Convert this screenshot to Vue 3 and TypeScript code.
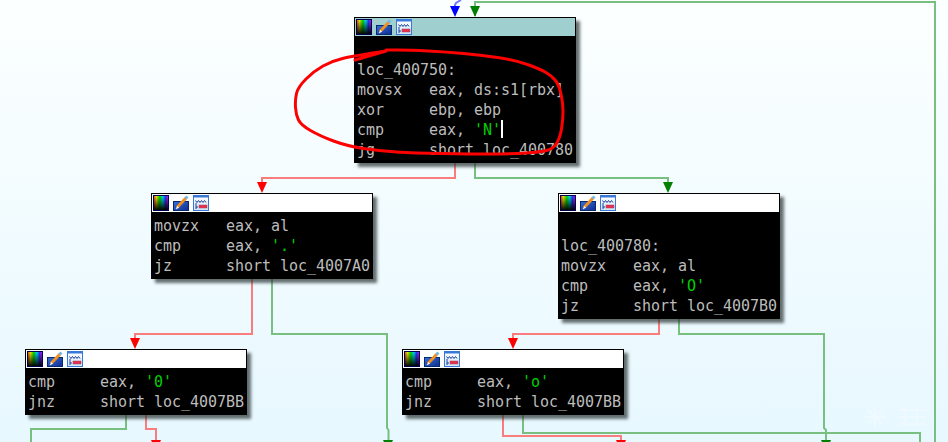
<script setup lang="ts">
interface Line { op?: string; args?: string; lit?: string; cursor?: boolean }
interface Block { id: string; x: number; y: number; active?: boolean; lines: Line[] }
interface Arrow { x: number; y: number; color: string }

const blocks: Block[] = [
  { id: 'a', x: 354, y: 17, active: true, lines: [
    {},
    { op: 'loc_400750:' },
    { op: 'movsx', args: 'eax, ds:s1[rbx]' },
    { op: 'xor', args: 'ebp, ebp' },
    { op: 'cmp', args: 'eax, ', lit: "'N'", cursor: true },
    { op: 'jg', args: 'short loc_400780' },
  ] },
  { id: 'b', x: 151, y: 193, lines: [
    { op: 'movzx', args: 'eax, al' },
    { op: 'cmp', args: 'eax, ', lit: "'.'" },
    { op: 'jz', args: 'short loc_4007A0' },
  ] },
  { id: 'c', x: 558, y: 193, lines: [
    {},
    { op: 'loc_400780:' },
    { op: 'movzx', args: 'eax, al' },
    { op: 'cmp', args: 'eax, ', lit: "'O'" },
    { op: 'jz', args: 'short loc_4007B0' },
  ] },
  { id: 'd', x: 25, y: 349, lines: [
    { op: 'cmp', args: 'eax, ', lit: "'0'" },
    { op: 'jnz', args: 'short loc_4007BB' },
  ] },
  { id: 'e', x: 402, y: 349, lines: [
    { op: 'cmp', args: 'eax, ', lit: "'o'" },
    { op: 'jnz', args: 'short loc_4007BB' },
  ] },
]

const redEdges = [
  'M455 163V178H262V186',
  'M252 279V334H135V342',
  'M659 319V334H513V342',
  'M146 415V429H156V442',
  'M503 415V436H621V442',
]
const greenEdges = [
  'M475 16V2H935V442',
  'M475 163V178H668V186',
  'M272 279V334H387V428L388.500 430V442',
  'M679 319V334H824V428L826 430V442',
  'M126 415V429H31V442',
  'M523 415V433H920V442',
]

const arrows: Arrow[] = [
  { x: 455, y: 17, color: '#0000ff' },
  { x: 475, y: 17, color: '#008000' },
  { x: 262, y: 193, color: '#ff0000' },
  { x: 668, y: 193, color: '#008000' },
  { x: 135, y: 349, color: '#ff0000' },
  { x: 513, y: 349, color: '#ff0000' },
  { x: 156, y: 451, color: '#ff0000' },
  { x: 388, y: 451, color: '#008000' },
  { x: 621, y: 451, color: '#ff0000' },
  { x: 826, y: 451, color: '#008000' },
]

const arrowPoints = (a: Arrow): string =>
  `${a.x - 5},${a.y - 11} ${a.x + 5},${a.y - 11} ${a.x},${a.y}`

const stroke: [number, number][] = [
  [355, 60], [386, 51], [353, 56], [332, 61], [314, 71], [298, 87], [295, 100], [296, 115],
  [301, 125], [320, 136], [347, 146], [380, 151], [413, 153], [470, 154], [513, 154],
  [540, 152], [553, 149], [560, 138], [563, 120], [563, 103], [559, 85], [552, 76],
  [540, 69], [515, 60], [480, 55], [447, 52], [410, 50], [386, 50],
]

function smooth(pts: [number, number][]): string {
  let d = `M${pts[0][0]} ${pts[0][1]}L${pts[1][0]} ${pts[1][1]}`
  for (let i = 2; i < pts.length - 1; i++) {
    const mx = (pts[i][0] + pts[i + 1][0]) / 2
    const my = (pts[i][1] + pts[i + 1][1]) / 2
    d += `Q${pts[i][0]} ${pts[i][1]} ${mx} ${my}`
  }
  const last = pts[pts.length - 1]
  return `${d}L${last[0]} ${last[1]}`
}
const scribble = smooth(stroke)
</script>

<template>
  <div class="canvas">
    <svg class="layer" width="948" height="442" viewBox="0 0 948 442">
      <defs>
        <linearGradient id="hue" x1="0" y1="0" x2="1" y2="0">
          <stop offset="0" stop-color="#ff3030" />
          <stop offset=".2" stop-color="#f0f000" />
          <stop offset=".42" stop-color="#00e000" />
          <stop offset=".62" stop-color="#00e0ff" />
          <stop offset=".8" stop-color="#2040ff" />
          <stop offset="1" stop-color="#ff00ff" />
        </linearGradient>
        <linearGradient id="shade" x1="0" y1="0" x2="0" y2="1">
          <stop offset="0" stop-color="#000" stop-opacity="0" />
          <stop offset="1" stop-color="#000" />
        </linearGradient>
        <linearGradient id="box" x1="0" y1="0" x2="1" y2="1">
          <stop offset="0" stop-color="#3a70d8" />
          <stop offset="1" stop-color="#0c2c90" />
        </linearGradient>
        <linearGradient id="page" x1="0" y1="0" x2="0" y2="1">
          <stop offset="0" stop-color="#ffffff" />
          <stop offset="1" stop-color="#cfe4fa" />
        </linearGradient>
      </defs>
      <g class="watermark">
        <path d="M875 406V428M864 417H886M867 409L883 425M883 409L867 425" />
        <path d="M899 410H926M899 417H926M899 424H926M905 408V426M917 408V426" />
      </g>
      <path d="M461 0L456 3L455 5V8" class="edge blue" />
      <path v-for="d in greenEdges" :key="d" :d="d" class="edge green" />
      <path v-for="d in redEdges" :key="d" :d="d" class="edge red" />
      <polygon v-for="a in arrows" :key="`${a.x}-${a.y}`" :points="arrowPoints(a)" :fill="a.color" />
    </svg>

    <section
      v-for="b in blocks"
      :key="b.id"
      class="block"
      :style="{ left: b.x + 'px', top: b.y + 'px' }"
    >
      <header class="title" :class="{ active: b.active }">
        <svg width="58" height="18" viewBox="0 0 58 18">
          <!-- palette -->
          <rect x="1.500" y="1.500" width="15" height="15" fill="url(#hue)" />
          <rect x="1.500" y="1.500" width="15" height="15" fill="url(#shade)" stroke="#000050" />
          <!-- rename: pencil over a blue box -->
          <rect x="21.500" y="7.500" width="15" height="9" fill="url(#box)" stroke="#062a70" />
          <path d="M25 13.500L34 4" stroke="#f09020" stroke-width="3" />
          <path d="M33.500 4.500L35.500 2.500" stroke="#70b8e8" stroke-width="3" />
          <path d="M24 15L25.500 12.500L26.500 13.500Z" fill="#fff" stroke="#fff" stroke-width=".6" />
          <!-- graph view: window with flow lines -->
          <rect x="41.500" y="1.500" width="15" height="15" fill="url(#page)" stroke="#3878d8" />
          <path d="M42 2.500H56" stroke="#3878d8" stroke-width="2" />
          <path d="M43.500 6.500L45 8.500L46.500 6.500L48 8.500L49.500 6.500L51 8.500L52.500 6.500L54 8.500" fill="none" stroke="#1c3c9c" />
          <path d="M44 9V13H46M44 13V15" fill="none" stroke="#1c3c9c" />
          <rect x="47" y="11" width="8" height="3" fill="#e83050" stroke="#a04050" stroke-width=".5" />
        </svg>
      </header>
      <div class="code">
        <div v-for="(l, i) in b.lines" :key="i" class="line">
          <template v-if="l.args"><span class="op">{{ l.op }}</span>{{ l.args }}</template>
          <template v-else>{{ l.op }}</template>
          <span v-if="l.lit" class="lit">{{ l.lit }}</span>
          <span v-if="l.cursor" class="cursor"></span>
        </div>
      </div>
    </section>

    <svg class="layer" width="948" height="442" viewBox="0 0 948 442">
      <path :d="scribble" class="scribble" />
    </svg>
  </div>
</template>

<style>
html, body { margin: 0; padding: 0; }
</style>

<style scoped>
.canvas {
  position: relative;
  width: 948px;
  height: 442px;
  overflow: hidden;
  background: linear-gradient(#fcffff, #e7f8ff);
}
.layer {
  position: absolute;
  left: 0;
  top: 0;
  pointer-events: none;
}
.layer:last-child { z-index: 2; }
.edge {
  fill: none;
  stroke-width: 2;
}
.red { stroke: #fb7c7c; }
.green { stroke: #78c080; }
.blue { stroke: #7878ff; }
.watermark path {
  fill: none;
  stroke: #fff;
  stroke-width: 2;
  opacity: .25;
}
.scribble {
  fill: none;
  stroke: #f00;
  stroke-width: 3;
  stroke-linecap: round;
  stroke-linejoin: round;
}
.block {
  position: absolute;
  width: 222px;
  box-sizing: border-box;
  border: 1px solid #000;
  border-bottom: 0;
  background: #000;
  box-shadow: 4px 4px 3px rgba(40, 50, 50, .7);
}
.title {
  height: 18px;
  background: #fff;
}
.title.active { background: #9fcfcf; }
.title svg { display: block; }
.code {
  padding: 4px 0 3px 2px;
  font-family: "DejaVu Sans Mono", "Liberation Mono", monospace;
  font-size: 15px;
  letter-spacing: -0.03px;
  color: #bcbcbc;
}
.line {
  height: 20px;
  line-height: 20px;
  white-space: pre;
}
.op {
  display: inline-block;
  width: 72px;
}
.lit { color: #00d000; }
.cursor {
  display: inline-block;
  width: 2px;
  height: 18px;
  background: #fff;
  vertical-align: top;
}
</style>
